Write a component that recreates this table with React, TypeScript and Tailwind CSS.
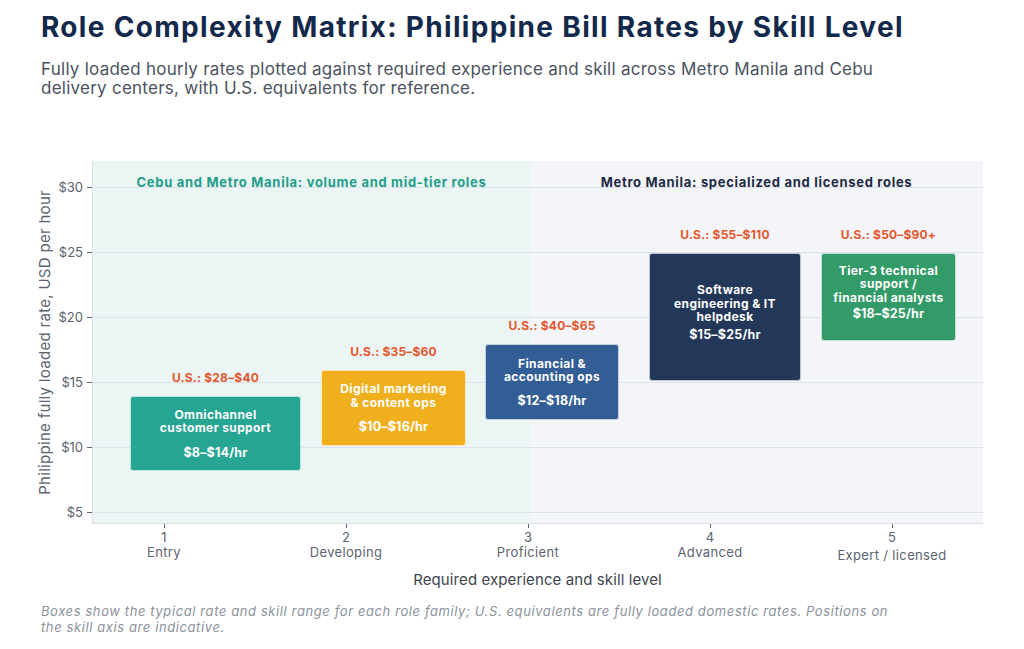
import React from "react";

const FONT = { fontFamily: "Inter, 'Noto Sans', sans-serif" };

type Box = {
  left: number;
  top: number;
  w: number;
  h: number;
  bg: string;
  lines: string[];
  price: string;
  us: string;
  gap: string;
  shift: string;
};

const boxes: Box[] = [
  { left: 37, top: 235, w: 171, h: 75, bg: "bg-[#26A593]", lines: ["Omnichannel", "customer support"], price: "$8–$14/hr", us: "U.S.: $28–$40", gap: "mt-[10px]", shift: "" },
  { left: 228, top: 209, w: 145, h: 76, bg: "bg-[#F0B01E]", lines: ["Digital marketing", "& content ops"], price: "$10–$16/hr", us: "U.S.: $35–$60", gap: "mt-[10px]", shift: "" },
  { left: 392, top: 183, w: 134, h: 76, bg: "bg-[#335E95]", lines: ["Financial &", "accounting ops"], price: "$12–$18/hr", us: "U.S.: $40–$65", gap: "mt-[9px]", shift: "" },
  { left: 556, top: 92, w: 152, h: 128, bg: "bg-[#233858]", lines: ["Software", "engineering & IT", "helpdesk"], price: "$15–$25/hr", us: "U.S.: $55–$110", gap: "mt-[3px]", shift: "pb-[9px]" },
  { left: 728, top: 92, w: 135, h: 88, bg: "bg-[#339B68]", lines: ["Tier-3 technical", "support /", "financial analysts"], price: "$18–$25/hr", us: "U.S.: $50–$90+", gap: "mt-[2px]", shift: "pb-[9px]" },
];

const yTicks = ["$30", "$25", "$20", "$15", "$10", "$5"];

const xTicks = [
  { n: "1", label: "Entry", extra: "" },
  { n: "2", label: "Developing", extra: "" },
  { n: "3", label: "Proficient", extra: "" },
  { n: "4", label: "Advanced", extra: "" },
  { n: "5", label: "Expert / licensed", extra: "mt-[3px]" },
];

export default function App() {
  return (
    <div className="w-[1024px] h-[649px] bg-white overflow-hidden" style={FONT}>
      <header className="pl-[41px] pt-[10px]">
        <h1 className="text-[28px] leading-[34px] font-bold text-[#13294B] tracking-[1.32px] whitespace-nowrap">
          Role Complexity Matrix: Philippine Bill Rates by Skill Level
        </h1>
        <p className="mt-[16px] text-[17px] leading-[19px] text-[#4B5260] tracking-[0.25px] whitespace-nowrap">
          Fully loaded hourly rates plotted against required experience and skill across Metro Manila and Cebu
          <br />
          delivery centers, with U.S. equivalents for reference.
        </p>
      </header>

      <div className="mt-[51px] h-[454px] flex">
        {/* y axis title */}
        <div className="w-[55px] pt-[12px] pr-[1px]">
          <div className="h-[363px] flex items-center justify-end">
            <div className="[writing-mode:vertical-rl] rotate-180 whitespace-nowrap text-[15px] leading-[18px] text-[#5C6370] tracking-[0.3px]">
              Philippine fully loaded rate, USD per hour
            </div>
          </div>
        </div>

        {/* y tick labels */}
        <div className="w-[37px] pt-[30px] flex flex-col gap-[49px]">
          {yTicks.map((t) => (
            <div key={t} className="flex items-center justify-end h-[16px]">
              <span className="text-[13px] leading-[16px] text-[#5C6370]">{t}</span>
              <span className="ml-[4px] w-[5px] h-px bg-[#5C6370]" />
            </div>
          ))}
        </div>

        {/* plot column */}
        <div className="w-[891px] pt-[12px] flex flex-col">
          <div className="relative h-[363px] flex border-l border-b border-[#D9DEE7]">
            <div className="w-[437px] bg-[#EBF5F3]" />
            <div className="flex-1 bg-[#F3F5F9]" />

            {/* gridlines */}
            <div className="absolute inset-0 pt-[26px] flex flex-col gap-[64px]">
              {yTicks.map((t) => (
                <div key={t} className="h-px bg-[#DCE1EA]" />
              ))}
            </div>

            {/* region labels */}
            <div className="absolute inset-x-0 top-[13px] flex text-[13px] leading-[16px] font-bold tracking-[0.7px]">
              <div className="w-[437px] text-center text-[#1F9E89]">Cebu and Metro Manila: volume and mid-tier roles</div>
              <div className="flex-1 text-center text-[#1E2A44]">Metro Manila: specialized and licensed roles</div>
            </div>

            {boxes.map((b) => (
              <React.Fragment key={b.price}>
                <div
                  className="absolute text-center text-[12px] leading-[14px] font-bold text-[#E4572E] whitespace-nowrap -translate-x-1/2 tracking-[0.2px]"
                  style={{ left: b.left + b.w / 2, top: b.top - 25 }}
                >
                  {b.us}
                </div>
                <div
                  className={`absolute ${b.bg} rounded-[3px] border border-white/70 flex flex-col items-center justify-center text-center text-white ${b.shift}`}
                  style={{ left: b.left, top: b.top, width: b.w, height: b.h }}
                >
                  <div className="text-[12px] leading-[13.5px] font-bold tracking-[0.4px]">
                    {b.lines.map((l) => (
                      <div key={l}>{l}</div>
                    ))}
                  </div>
                  <div className={`${b.gap} text-[12.5px] leading-[15px] font-bold tracking-[0.2px]`}>{b.price}</div>
                </div>
              </React.Fragment>
            ))}
          </div>

          {/* x ticks */}
          <div className="flex -ml-[19px]">
            {xTicks.map((t) => (
              <div key={t.n} className="w-[182px] flex flex-col items-center">
                <span className="w-px h-[4px] bg-[#5C6370]" />
                <span className="text-[13px] leading-[15px] text-[#5C6370] mt-[2px]">{t.n}</span>
                <span className={`text-[13px] leading-[15px] text-[#5C6370] tracking-[0.35px] ${t.extra}`}>{t.label}</span>
              </div>
            ))}
          </div>

          <div className="mt-[8px] text-center text-[15px] leading-[18px] text-[#3F4550] tracking-[0.1px]">
            Required experience and skill level
          </div>
        </div>
      </div>

      <p className="pl-[41px] text-[13px] leading-[16px] italic text-[#8C929C] tracking-[0.6px] whitespace-nowrap">
        Boxes show the typical rate and skill range for each role family; U.S. equivalents are fully loaded domestic rates. Positions on
        <br />
        the skill axis are indicative.
      </p>
    </div>
  );
}
